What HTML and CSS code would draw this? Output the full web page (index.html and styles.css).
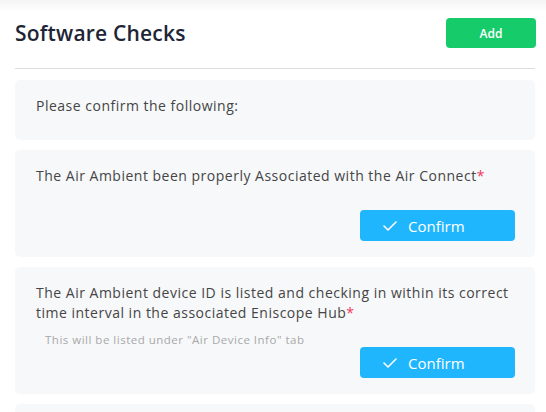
FILE: index.html
```html
<!DOCTYPE html>
<html lang="en">
<head>
<meta charset="utf-8">
<title>Software Checks</title>
<link rel="stylesheet" href="styles.css">
</head>
<body>
<div class="page">
  <header class="header">
    <h1 class="title">Software Checks</h1>
    <button class="btn-add" type="button">Add</button>
  </header>
  <hr class="divider">
  <section class="card card-intro">
    <p class="intro">Please confirm the following:</p>
  </section>
  <section class="card">
    <p class="question">The Air Ambient been properly Associated with the Air Connect<span class="req">*</span></p>
    <p class="hint"></p>
    <div class="actions">
      <button class="btn-confirm" type="button">
        <svg class="check" width="14" height="10" viewBox="0 0 14 10" aria-hidden="true"><polyline points="1,5 5,9 13,1" fill="none" stroke="#fff" stroke-width="1.6" stroke-linecap="round" stroke-linejoin="round"/></svg>
        <span>Confirm</span>
      </button>
    </div>
  </section>
  <section class="card">
    <p class="question">The Air Ambient device ID is listed and checking in within its correct time interval in the associated Eniscope Hub<span class="req">*</span></p>
    <p class="hint">This will be listed under "Air Device Info" tab</p>
    <div class="actions">
      <button class="btn-confirm" type="button">
        <svg class="check" width="14" height="10" viewBox="0 0 14 10" aria-hidden="true"><polyline points="1,5 5,9 13,1" fill="none" stroke="#fff" stroke-width="1.6" stroke-linecap="round" stroke-linejoin="round"/></svg>
        <span>Confirm</span>
      </button>
    </div>
  </section>
  <section class="card card-next"></section>
</div>
</body>
</html>
```

FILE: styles.css
```css
* { box-sizing: border-box; }
html, body { margin: 0; padding: 0; background: #fff; }
body {
  font-family: "Open Sans", "Liberation Sans", sans-serif;
  color: #454545;
  overflow: hidden;
  height: 412px;
}
.page {
  padding: 18px 11px 0 15px;
  background: linear-gradient(to bottom, rgba(0,0,0,0.045), rgba(0,0,0,0) 12px);
}
.header {
  display: flex;
  align-items: center;
  justify-content: space-between;
  height: 30px;
}
.title {
  margin: 0;
  font-size: 21px;
  font-weight: 600;
  letter-spacing: 0.2px;
  color: #1e2536;
  line-height: 30px;
}
.btn-add {
  width: 90px;
  height: 30px;
  border: 0;
  border-radius: 4px;
  background: #16cc6a;
  color: #fff;
  font-family: inherit;
  font-size: 12px;
  font-weight: 600;
  margin-right: -1px;
}
.divider {
  margin: 20px 0 11px;
  border: 0;
  border-top: 1px solid #dedede;
  height: 0;
}
.card {
  background: #f7f8fa;
  border-radius: 5px;
  padding: 16px 20px 16px 21px;
  margin-bottom: 10px;
}
.card-intro { padding-bottom: 24px; }
.card-next { height: 40px; }
.intro, .question {
  margin: 0;
  font-size: 14px;
  line-height: 20px;
  letter-spacing: 0.5px;
  color: #454545;
}
.req { color: #f5365c; letter-spacing: 0; }
.hint {
  margin: 10px 0 0 9px;
  height: 14px;
  font-size: 11.5px;
  line-height: 14px;
  letter-spacing: 0.5px;
  color: #a8a8a8;
}
.actions {
  display: flex;
  justify-content: flex-end;
}
.btn-confirm {
  display: flex;
  align-items: center;
  gap: 11px;
  width: 155px;
  height: 31px;
  padding: 0 0 0 23px;
  border: 0;
  border-radius: 4px;
  background: #20b6fd;
  color: #fff;
  font-family: inherit;
  font-size: 15px;
}
.check { display: block; }
```
